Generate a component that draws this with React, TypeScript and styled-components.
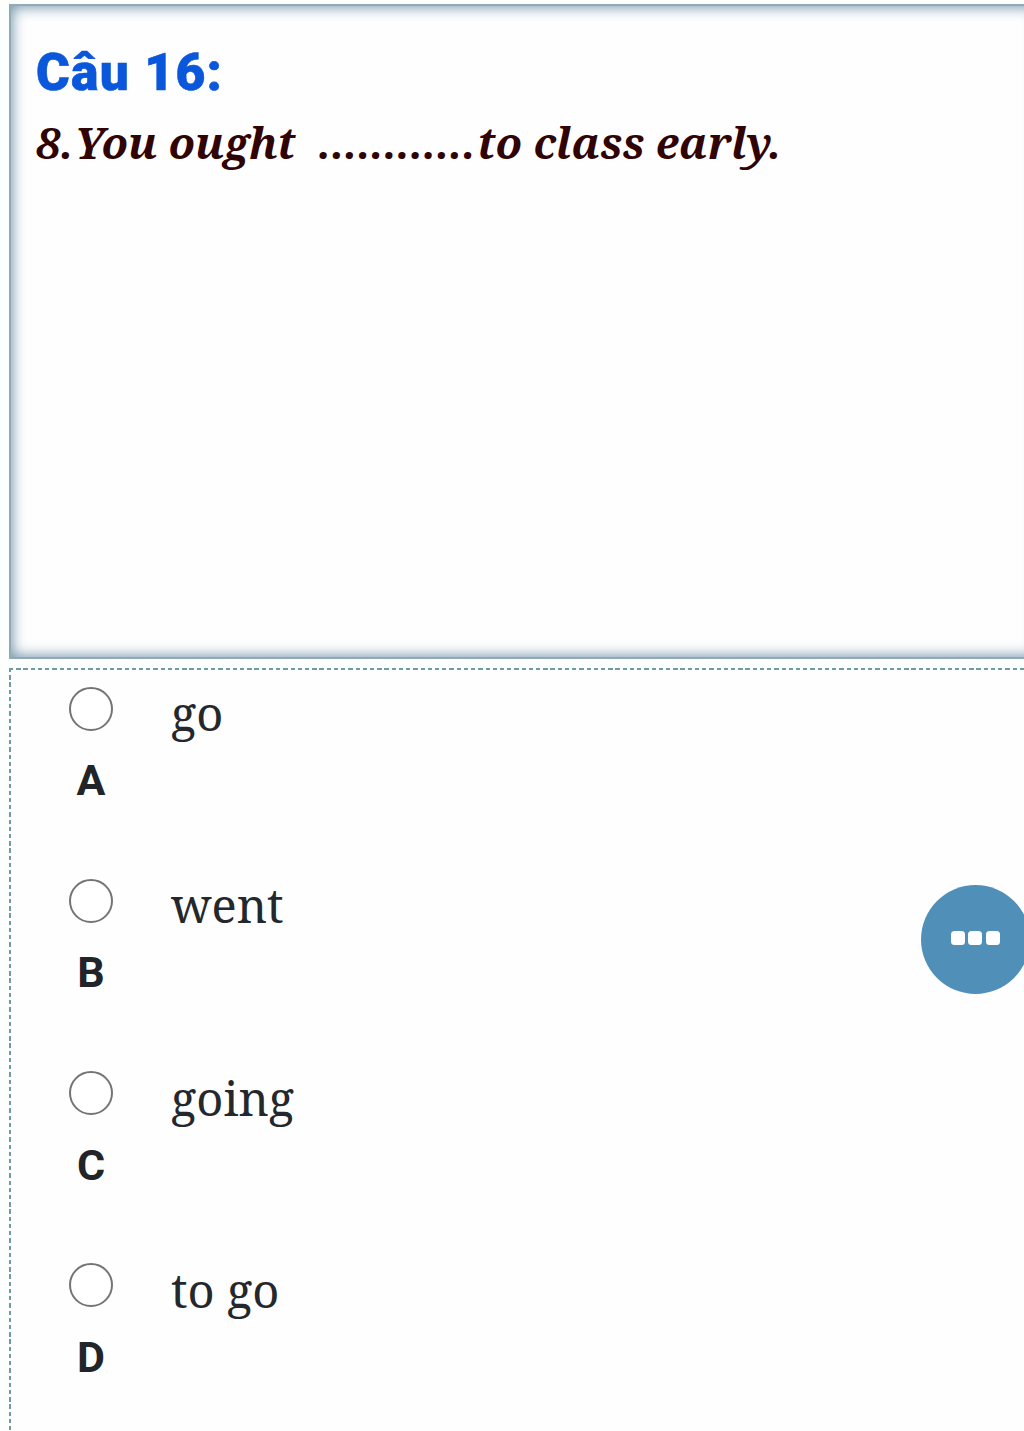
import React from "react";
import styled, { createGlobalStyle } from "styled-components";

const GlobalStyle = createGlobalStyle`
  * { box-sizing: border-box; }
  body { margin: 0; background: #fdfefe; overflow: hidden; }
`;

const serif = `"Noto Serif", "DejaVu Serif Condensed", "DejaVu Serif", serif`;

const Page = styled.main`
  width: 1024px;
  height: 1431px;
  overflow: hidden;
  padding: 4px 0 0 9px;
  display: flex;
  flex-direction: column;
  gap: 9px;
`;

const QuestionPanel = styled.section`
  width: 1030px;
  height: 655px;
  flex: none;
  padding: 37px 25px;
  background: #fefefe;
  border: 2px solid #93a9b3;
  box-shadow: inset 0 0 14px 1px #6d91a9;
`;

const Title = styled.h1`
  margin: 0;
  font: 900 51.5px/60px Roboto, sans-serif;
  letter-spacing: 1.3px;
  -webkit-text-stroke: 0.6px #0b57dc;
  color: #0b57dc;
`;

const Question = styled.p`
  margin: 10px 0 0;
  display: flex;
  font: italic 700 43.2px/60px ${serif};
  color: #300404;
  white-space: pre;
`;

const Part = styled.span<{ $width: number }>`
  flex: none;
  width: ${(p) => p.$width}px;
`;

const AnswerPanel = styled.section`
  width: 1030px;
  flex: 1;
  padding: 18px 0 0 60px;
  background:
    repeating-linear-gradient(90deg, #6f9c9e 0 4.3px, transparent 4.3px 7.22px) 0 0 / 100% 2px no-repeat,
    repeating-linear-gradient(180deg, #6f9c9e 0 4.3px, transparent 4.3px 7.22px) 0 0 / 2px 100% no-repeat,
    #fefefe;
`;

const AnswerRow = styled.label`
  display: grid;
  grid-template-columns: 44px 1fr;
  column-gap: 58px;
  height: 192.3px;
`;

const Choice = styled.div`
  display: flex;
  flex-direction: column;
  align-items: center;
`;

const Radio = styled.input`
  appearance: none;
  margin: 0.5px 0 0;
  width: 44px;
  height: 44px;
  flex: none;
  border: 2px solid #747474;
  border-radius: 50%;
  background: #fff;
`;

const Letter = styled.span`
  margin-top: 23.6px;
  font: 700 43px/52px Roboto, sans-serif;
  color: #212529;
`;

const AnswerText = styled.span`
  margin-top: -3px;
  font: 400 47px/60px ${serif};
  color: #24282c;
  white-space: nowrap;
`;

const MoreButton = styled.button`
  position: fixed;
  left: 921px;
  top: 885px;
  width: 109px;
  height: 109px;
  padding: 0 1px 3px 0;
  border: 0;
  border-radius: 50%;
  background: #508fb8;
  display: flex;
  align-items: center;
  justify-content: center;
  gap: 3.5px;
`;

const Dot = styled.i`
  width: 14px;
  height: 14px;
  border-radius: 3.5px;
  background: #fff;
`;

const answers = [
  { letter: "A", text: "go" },
  { letter: "B", text: "went" },
  { letter: "C", text: "going" },
  { letter: "D", text: "to go" },
];

export default function App() {
  return (
    <Page>
      <GlobalStyle />
      <QuestionPanel>
        <Title>Câu 16:</Title>
        <Question>
          <Part $width={38.5}>8.</Part>
          <Part $width={243.5}>You ought </Part>
          <Part $width={159.5}>............</Part>
          <Part $width={310}>to class early.</Part>
        </Question>
      </QuestionPanel>
      <AnswerPanel>
        {answers.map((a) => (
          <AnswerRow key={a.letter}>
            <Choice>
              <Radio type="radio" name="answer" />
              <Letter>{a.letter}</Letter>
            </Choice>
            <AnswerText>{a.text}</AnswerText>
          </AnswerRow>
        ))}
      </AnswerPanel>
      <MoreButton aria-label="More">
        <Dot />
        <Dot />
        <Dot />
      </MoreButton>
    </Page>
  );
}
